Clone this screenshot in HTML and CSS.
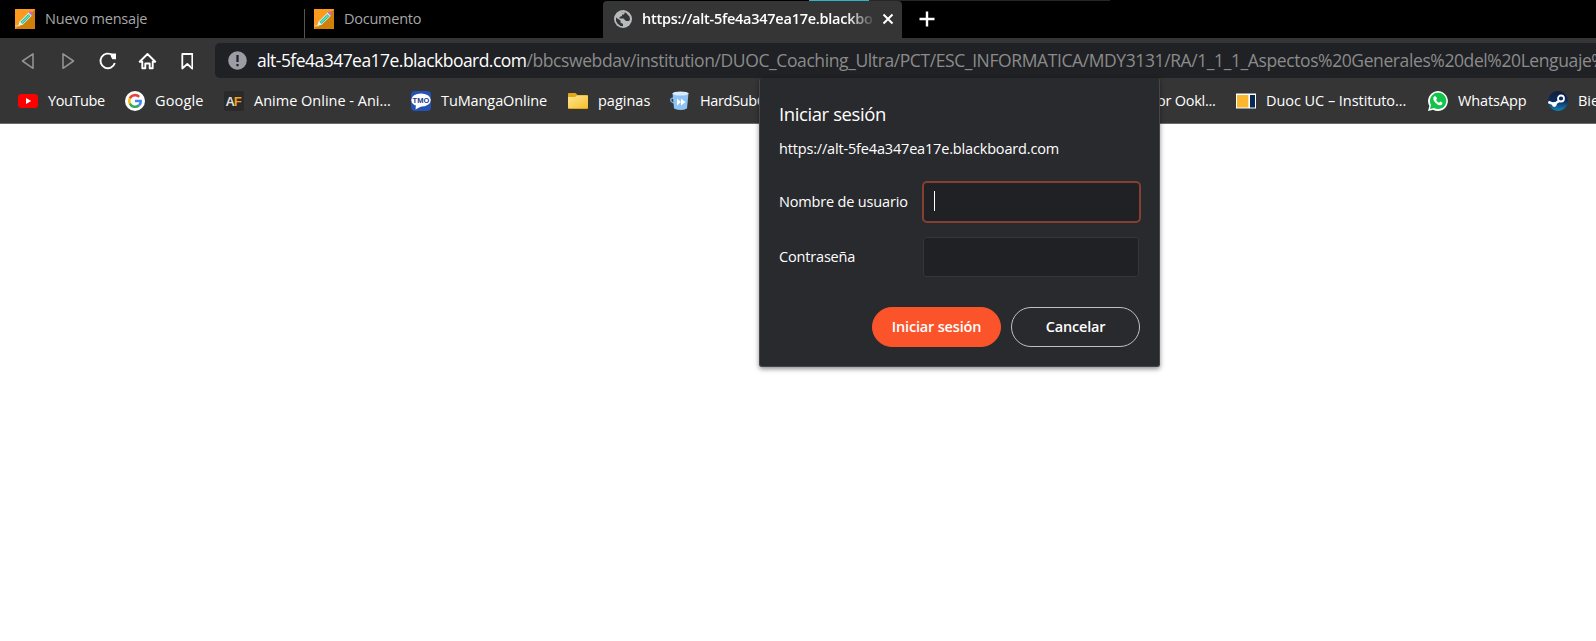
FILE: index.html
```html
<!DOCTYPE html>
<html lang="es">
<head>
<meta charset="utf-8">
<title>Iniciar sesión</title>
<link rel="stylesheet" href="styles.css">
</head>
<body>
<svg class="defs" width="0" height="0">
  <defs>
    <linearGradient id="orange" x1="0" y1="0" x2="1" y2="1"><stop offset=".5" stop-color="#fb9a1c"/><stop offset=".5" stop-color="#d07f08"/></linearGradient>
    <linearGradient id="folder" x1="0" y1="0" x2="1" y2="1"><stop offset="0" stop-color="#ffe590"/><stop offset="1" stop-color="#f5c02d"/></linearGradient>
    <linearGradient id="steam" x1="0" y1="0" x2="0" y2="1"><stop offset="0" stop-color="#111d3c"/><stop offset=".5" stop-color="#0c2b5e"/><stop offset="1" stop-color="#1387b8"/></linearGradient>
    <symbol id="pencil" viewBox="0 0 20 20">
      <path d="M0 0h20v20H0z" fill="url(#orange)"/>
      <path d="M0 16.800h5" stroke="#f7c98a"/>
      <path d="M3.200 17L4.600 12.600 13.600 3.600l3.200 3.200L7.800 15.800z" fill="#e8f3e6"/>
      <path d="M5.400 12.900L13.400 4.900l2.200 2.200L7.700 15z" fill="#25bfa0"/>
      <path d="M6.600 13.900L14.500 6" stroke="#a5edd6" stroke-width="1"/>
      <path d="M13.700 3.500L14.800 2.600q3-.3 3 2.800l-1 1.200z" fill="#c06cc8"/>
    </symbol>
  </defs>
</svg>
<header class="browser">
  <div class="tabs">
    <div class="tab first"><svg width="20" height="20"><use href="#pencil"/></svg><span class="t t-nuevo">Nuevo mensaje</span></div>
    <div class="tab second"><svg width="20" height="20"><use href="#pencil"/></svg><span class="t t-doc">Documento</span></div>
    <div class="tab active">
      <svg width="18" height="18" viewBox="0 0 18 18"><circle cx="9" cy="9" r="9" fill="#b8bbbe"/><path d="M2 7.500l4.500 3v2L9 14v2.200A7.200 7.200 0 0 1 2 7.500zM7 2.200h4L10 4.500H8V6L5.500 7v1.500h4L12 11h3l1-1.500-.5-3L13 4l-1-1.200C10 1.800 8 1.800 7 2.200z" fill="#353535"/></svg>
      <span class="clip"><b class="t t-tab">https://alt-5fe4a347ea17e.blackboard.com</b></span>
      <svg width="12" height="12" viewBox="0 0 12 12"><path d="M1.500 1.500l9 9m0-9l-9 9" stroke="#fff" stroke-width="2"/></svg>
    </div>
    <svg class="plus" width="16" height="16" viewBox="0 0 16 16"><path d="M8 .5v15M.5 8h15" stroke="#fff" stroke-width="2.400"/></svg>
    <i class="strip"></i>
  </div>
  <div class="nav">
    <svg width="172" height="24" viewBox="0 0 172 24" fill="none" stroke-width="1.600" stroke-linejoin="round">
      <path d="M12 4.800v14.500L1.500 12zM42 4.800v14.500L52.500 12z" stroke="#929292"/>
      <path d="M91.500 6.300A7.300 7.300 0 1 0 93.800 14" stroke="#fff" stroke-width="1.900"/><path d="M89.500 4.500h5.500v5.800h-3.500q-2-2.500-2-5.800z" fill="#fff"/>
      <path d="M118.700 12.700L126.500 5l7.800 7.700h-2.600v6.500h-3v-4.700h-4.400v4.700h-3v-6.500z" stroke="#fff" stroke-width="1.900"/>
      <path d="M161.300 5h10v14.500l-5-4.500-5 4.500z" stroke="#fff" stroke-width="1.800"/>
    </svg>
    <div class="address">
      <svg width="19" height="19" viewBox="0 0 19 19"><circle cx="9.500" cy="9.500" r="9.300" fill="#9a9da4"/><path d="M9.500 4v7M9.500 13v2.200" stroke="#202124" stroke-width="2.200"/></svg>
      <span class="t t-host">alt-5fe4a347ea17e.blackboard.com</span><span class="t t-path">/bbcswebdav/institution/DUOC_Coaching_Ultra/PCT/ESC_INFORMATICA/MDY3131/RA/1_1_1_Aspectos%20Generales%20del%20Lenguaje%</span>
    </div>
  </div>
  <nav class="marks">
    <a class="m1"><svg width="20" height="14" viewBox="0 0 20 14"><rect width="20" height="14" rx="3.500" fill="#f00"/><path d="M8 4v6l5.200-3z" fill="#fff"/></svg><span class="t t-yt">YouTube</span></a>
    <a class="m2"><svg width="20" height="20" viewBox="0 0 20 20" fill="none" stroke-width="2.600"><circle cx="10" cy="10" r="10" fill="#fff"/><path d="M4.800 7.500A5.800 5.800 0 0 1 14.200 5.900" stroke="#ea4335"/><path d="M4.800 7.500a5.800 5.800 0 0 0 0 5" stroke="#fbbc05"/><path d="M4.800 12.500a5.800 5.800 0 0 0 9.200 1.700" stroke="#34a853"/><path d="M14 14.200q2-1.800 1.700-4.200H10" stroke="#4285f4"/></svg><span class="t t-goo">Google</span></a>
    <a class="m3"><svg width="20" height="20" viewBox="0 0 20 20"><rect width="20" height="20" rx="2" fill="#2a2a2a"/><text x="1.500" y="15" class="af" fill="#ddd">A</text><text x="9.800" y="15" class="af" fill="#f5a11c">F</text></svg><span class="t">Anime Online - Ani...</span></a>
    <a class="m4"><svg width="20" height="20" viewBox="0 0 20 20"><rect width="20" height="20" rx="4" fill="#2453b5"/><ellipse cx="10" cy="9" rx="9.800" ry="6.600" fill="#fff"/><path d="M5 14l-.5 4.500 6.500-3.500z" fill="#fff"/><text x="1.600" y="12" class="tmo">TMO</text></svg><span class="t t-tmo">TuMangaOnline</span></a>
    <a class="m5"><svg width="20" height="16" viewBox="0 0 20 16"><path d="M1 0h6.500l2 2H19q1 0 1 1v12q0 1-1 1H1q-1 0-1-1V1q0-1 1-1z" fill="#e2a818"/><path d="M0 4h7l2-1.500h10q1 0 1 1V15H0z" fill="url(#folder)"/></svg><span class="t">paginas</span></a>
    <a class="m6"><svg width="20" height="20" viewBox="0 0 20 20"><path d="M4 7Q0 7 1 10q1 2 4 2" fill="none" stroke="#6faee8" stroke-width="1.500"/><path d="M2.500 2L4 17.500q7 3 13 0L18.500 2z" fill="#8fc3f4"/><ellipse cx="10.500" cy="2.500" rx="8" ry="2" fill="#d9ecfc"/><path d="M7 7.500l4 3.500-4 3.500zM11 7.500l4.500 3.500-4.500 3.500z" fill="#fff"/></svg><span class="t t-hard">HardSubC</span></a>
    <a class="m7"><span class="t t-ookl">or Ookl...</span></a>
    <a class="m8"><svg width="20" height="16" viewBox="0 0 20 16"><path d="M0 0h20v16H0z" fill="#fff"/><path d="M0 0h20v1H0zM0 15h20v1H0z" fill="#8f98a3"/><path d="M1 2h11v12.500H1z" fill="#fdb62f"/><path d="M12 2h1.200v12.500H12z" fill="#fde3ae"/><path d="M14 2h5v12.500h-5z" fill="#062a57"/></svg><span class="t t-duoc">Duoc UC – Instituto...</span></a>
    <a class="m9"><svg width="20" height="20" viewBox="0 0 20 20"><path d="M0 20l1.400-5A9.900 9.900 0 1 1 5.200 18.700z" fill="#fff"/><path d="M2 18l1-4a8.200 8.200 0 1 1 3 3z" fill="#13c34b"/><path d="M6.700 5.200l1.300.2 1 2.300-.9 1.200q1 2 3 2.800l1.200-1.200 2.200 1.200q.2 2.200-2.300 2.500-2.500 0-5-2.800-2.500-2.700-1.900-4.600.4-1.300 1.400-1.600z" fill="#fff"/></svg><span class="t t-wa">WhatsApp</span></a>
    <a class="m10"><svg width="20" height="20" viewBox="0 0 20 20"><circle cx="10" cy="10" r="10" fill="url(#steam)"/><path d="M.3 11l5.700 2.300L11 10" stroke="#fff" stroke-width="2.600" fill="none"/><circle cx="6.300" cy="13.500" r="2.400" fill="#fff"/><circle cx="13" cy="7.500" r="3" fill="#0c2b5e" stroke="#fff" stroke-width="1.800"/></svg><span class="t">Bie</span></a>
  </nav>
</header>
<form class="dialog">
  <h1 class="t">Iniciar sesión</h1>
  <p class="t">https://alt-5fe4a347ea17e.blackboard.com</p>
  <div class="row user"><label>Nombre de usuario</label><div class="field focus"><i class="caret"></i></div></div>
  <div class="row pass"><label>Contraseña</label><div class="field"></div></div>
  <div class="actions"><div class="btn primary">Iniciar sesión</div><div class="btn">Cancelar</div></div>
</form>
</body>
</html>
```
FILE: styles.css
```css
* { box-sizing: border-box; }
body { margin: 0; height: 641px; overflow: hidden; background: #fff; color: #fff; font: 14.5px/20px "Open Sans", "Noto Sans", sans-serif; }
svg { flex: none; display: block; }
.defs { position: absolute; }
.t { white-space: nowrap; flex: none; }
.browser { height: 124px; background: #353535; border-bottom: 1px solid #6b6b6b; overflow: hidden; }
.tabs { position: relative; display: flex; height: 38px; background: #000; color: #a6a6a6; }
.tab { display: flex; align-items: center; gap: 10px; }
.first { width: 304px; padding-left: 15px; }
.t-nuevo { letter-spacing: -.2px; }
.t-doc { letter-spacing: -.25px; }
.second { width: 299px; height: 29px; margin-top: 9px; padding: 0 0 9px 9px; border-left: 1px solid #555; }
.active { width: 299px; height: 37px; margin-top: 1px; padding: 0 9px 1px 11px; background: #353535; border-radius: 4px 4px 0 0; color: #fff; }
.clip { width: 230px; overflow: hidden; display: flex; mask-image: linear-gradient(90deg, #000 205px, transparent 234px); }
.clip + svg { margin-right: -1px; }
.t-tab { font-weight: 600; letter-spacing: -.25px; }
.plus { margin: 11px 0 0 17px; }
.strip { position: absolute; left: 809px; top: 0; width: 301px; height: 1px; background: linear-gradient(90deg, #2fb5cb 60px, #262626 60px); }
.nav { display: flex; height: 45px; padding: 5px 0 5px 21px; align-items: center; }
.address { display: flex; align-items: center; height: 35px; flex: 1; min-width: 0; margin-left: 22px; padding-left: 13px; background: #202124; border-radius: 5px 0 0 5px; overflow: hidden; font-size: 17.5px; }
.address svg { margin-right: 10px; }
.address .t { padding-bottom: 1px; }
.t-host { letter-spacing: -.53px; }
.t-path { color: #8b8b8b; letter-spacing: -.4px; }
.marks { display: flex; height: 36px; padding-left: 18px; }
.marks a { display: flex; align-items: center; gap: 10px; flex: none; }
.m1 { width: 107px; }
.m2 { width: 99px; }
.m3 { width: 187px; }
.m4 { width: 157px; }
.m5 { width: 102px; }
.marks .m6 { width: 90px; margin-right: 397px; overflow: hidden; }
.m7 { width: 79px; }
.m8 { width: 192px; }
.m9 { width: 120px; }
.t-yt { letter-spacing: -.4px; }
.t-goo { letter-spacing: .15px; }
.t-tmo { letter-spacing: -.1px; }
.t-hard { letter-spacing: -.35px; }
.t-ookl { letter-spacing: -.25px; }
.t-duoc { letter-spacing: -.05px; }
.t-wa { letter-spacing: -.1px; }
.af { font: bold 13px "Liberation Sans", sans-serif; }
.tmo { font: bold 7.500px "Liberation Sans", sans-serif; fill: #20408f; }
.dialog { position: absolute; left: 759px; top: 78px; width: 401px; height: 289px; padding: 25px 19px 0; background: #292a2d; border: 1px solid #454648; border-top-color: #292a2d; border-radius: 3px; box-shadow: 0 2px 5px rgba(0,0,0,.45); letter-spacing: -.17px; }
h1, p { margin: 0; font-weight: 400; }
h1 { font-size: 18.5px; letter-spacing: -.4px; }
p { margin-top: 15px; }
.row { display: flex; justify-content: space-between; align-items: center; height: 42px; }
.user { margin-top: 22px; }
.pass { margin-top: 13px; }
.field { width: 216px; height: 40px; margin-right: 1px; background: #202124; border: 1px solid #35363a; border-radius: 3px; }
.focus { width: 219px; height: 42px; margin-right: -1px; border: 2px solid #843f30; border-radius: 5px; padding: 8px 10px; }
.caret { display: block; width: 1px; height: 20px; background: #fff; }
.actions { display: flex; justify-content: flex-end; gap: 10px; margin-top: 29px; }
.btn { width: 129px; height: 40px; border: 1px solid #bdc1c6; border-radius: 20px; text-align: center; line-height: 38px; font-weight: 600; }
.primary { background: #fb542b; border-color: #fb542b; }
```
